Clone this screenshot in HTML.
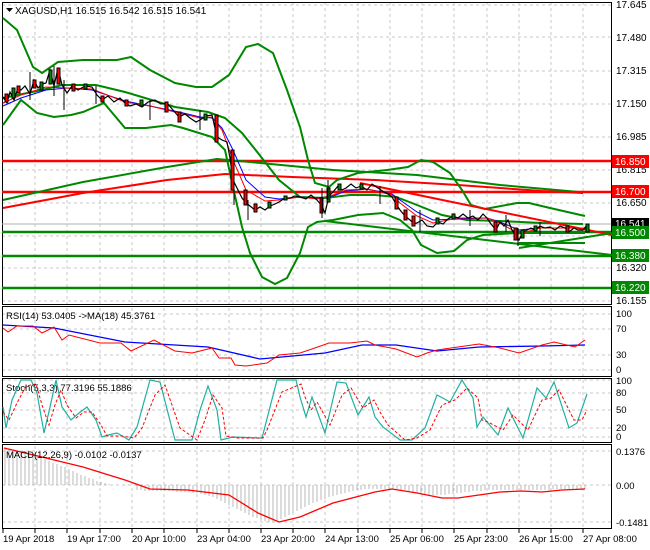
<!DOCTYPE html>
<html><head><meta charset="utf-8"><style>
html,body{margin:0;padding:0;background:#fff;}
svg{display:block;font-family:"Liberation Sans",sans-serif;}
</style></head><body>
<svg width="650" height="550" viewBox="0 0 650 550" xmlns="http://www.w3.org/2000/svg">
<rect width="650" height="550" fill="#fff"/>
<g stroke="#c8c8c8" stroke-dasharray="3,3" stroke-width="1">
<path d="M35 2V528M67 2V528M100 2V528M132 2V528M164 2V528M197 2V528M229 2V528M261 2V528M293 2V528M325 2V528M358 2V528M390 2V528M422 2V528M454 2V528M487 2V528M519 2V528M551 2V528M583 2V528"/>
<path d="M2 5H611M2 37H611M2 71H611M2 104H611M2 137H611M2 170H611M2 203H611M2 236H611M2 268H611M2 301H611"/>
<path d="M2 314H611M2 329H611M2 355H611M2 370H611M2 380H611M2 393H611M2 410H611M2 428H611M2 437H611M2 451H611M2 485H611M2 522H611"/>
</g>
<g fill="none" stroke="#000" stroke-width="1">
<rect x="2.5" y="2.5" width="609" height="302"/>
<rect x="2.5" y="306.5" width="609" height="70"/>
<rect x="2.5" y="378.5" width="609" height="64"/>
<rect x="2.5" y="444.5" width="609" height="84"/>
</g>
<line x1="2" y1="224" x2="611" y2="224" stroke="#b0b0b0"/>
<g stroke-width="2.5">
<line x1="2" y1="161" x2="611" y2="161" stroke="#f00"/>
<line x1="2" y1="192" x2="611" y2="192" stroke="#f00"/>
<line x1="2" y1="232" x2="611" y2="232" stroke="#080"/>
<line x1="2" y1="256" x2="611" y2="256" stroke="#080"/>
<line x1="2" y1="288" x2="611" y2="288" stroke="#080"/>
</g>
<polyline fill="none" stroke="#080" stroke-width="2" points="3,200 83,182 167,167 217,159 250,162 333,170 417,175 500,185 579,192"/>
<polyline fill="none" stroke="#f00" stroke-width="2" points="3,208 83,193 167,180 225,174 292,177 375,180 458,185 542,191 583,193"/>
<g fill="none" stroke="#080" stroke-width="2">
<polyline points="3,18 17,30 33,67 42,73 58,62 83,60 117,60 131,57 150,70 175,83 196,87 212,87 229,75 246,47 258,44 273,53 287,90 300,127 308,160 315,183 329,187 337,180 358,173 387,170 408,167 421,160 433,162 450,173 462,190 471,205 485,209 517,203 529,203 550,208 585,216"/>
<polyline points="3,125 21,100 37,113 54,117 71,115 83,112 104,103 125,128 146,128 171,125 183,128 212,137 225,150 233,187 242,227 250,253 262,277 275,284 287,278 300,253 308,227 317,222 333,220 358,215 383,213 400,220 412,230 421,245 437,253 454,251 467,240 483,235 517,233 542,233 585,233"/>
<polyline points="3,98 42,90 62,85 96,85 125,92 175,107 208,112 225,118 242,133 258,153 279,180 300,197 325,198 350,195 375,195 396,197 412,203 442,215 467,220 500,221 542,223 583,224"/>
</g>
<line x1="360" y1="183" x2="612" y2="235" stroke="#f00" stroke-width="2"/>
<line x1="325" y1="221" x2="612" y2="255" stroke="#080" stroke-width="2"/>
<line x1="519" y1="248" x2="612" y2="233" stroke="#080" stroke-width="2"/>
<line x1="519" y1="243" x2="585" y2="243" stroke="#080" stroke-width="2"/>
<polyline fill="none" stroke="#00f" stroke-width="1" points="3,106 21,98 46,90 67,88 92,90 125,101 150,106 179,112 200,117 212,118 222,128 233,150 246,180 265,197 279,199 300,197 317,198 333,196 346,191 367,189 392,194 400,200 417,212 433,220 458,219 487,218 500,222 519,230 540,228 567,228 587,228"/>
<polyline fill="none" stroke="#f00" stroke-width="1" points="3,103 21,95 46,87 67,88 92,89 125,102 150,106 179,113 200,118 212,117 222,130 233,160 246,190 265,201 279,200 300,197 317,199 333,195 346,190 367,189 392,195 400,203 417,216 433,223 458,218 487,218 500,223 519,234 540,228 567,228 587,228"/>
<polyline fill="none" stroke="#000" stroke-width="1.2" points="3,97 7,103 10,92 14,100 18,88 21,90 25,86 30,94 34,80 38,88 42,84 46,83 50,70 54,86 58,68 62,85 67,93 72,86 78,90 85,86 92,87 97,95 102,100 108,96 114,102 120,98 125,103 130,106 136,104 142,107 148,102 155,100 161,104 167,103 173,110 179,117 185,114 190,118 196,122 200,120 206,116 212,115 217,137 222,140 227,142 230,158 233,180 238,190 242,198 246,203 250,206 255,210 260,207 265,210 270,206 275,204 279,202 285,198 290,198 295,196 300,197 306,199 311,195 317,200 322,206 325,213 329,196 333,192 338,186 342,190 346,188 351,184 356,188 361,186 367,190 372,184 378,188 384,192 388,194 392,197 396,204 400,210 405,216 410,220 414,224 417,223 422,220 427,226 433,227 438,222 443,224 448,219 453,216 458,218 463,214 468,218 473,216 478,220 483,214 487,218 491,224 496,230 500,222 504,226 508,220 512,230 516,236 519,240 523,232 527,230 531,228 535,230 540,226 545,228 550,227 555,230 560,226 565,228 569,232 574,228 578,230 583,230 587,225"/>
<g stroke="#000" stroke-width="1" fill="#f00">
<rect x="5" y="94" width="3" height="8"/><rect x="17" y="86" width="3" height="7"/><rect x="33" y="80" width="3" height="8"/><rect x="57" y="68" width="3" height="16"/><rect x="72" y="84" width="3" height="7"/><rect x="101" y="96" width="3" height="6"/><rect x="125" y="100" width="3" height="6"/><rect x="165" y="102" width="3" height="10"/><rect x="178" y="112" width="3" height="10"/><rect x="215" y="115" width="3" height="27"/><rect x="231" y="150" width="3" height="40"/><rect x="244" y="190" width="3" height="15"/><rect x="254" y="204" width="3" height="8"/><rect x="320" y="198" width="3" height="15"/><rect x="395" y="197" width="3" height="12"/><rect x="404" y="210" width="3" height="10"/><rect x="412" y="216" width="3" height="10"/><rect x="494" y="222" width="3" height="10"/><rect x="514" y="228" width="3" height="12"/><rect x="566" y="226" width="3" height="6"/>
</g>
<g stroke="#000" stroke-width="1" fill="#080">
<rect x="12" y="88" width="3" height="10"/><rect x="40" y="82" width="3" height="8"/><rect x="49" y="70" width="3" height="14"/><rect x="84" y="84" width="3" height="5"/><rect x="140" y="100" width="3" height="6"/><rect x="204" y="114" width="3" height="6"/><rect x="268" y="202" width="3" height="6"/><rect x="284" y="196" width="3" height="4"/><rect x="327" y="188" width="3" height="14"/><rect x="338" y="184" width="3" height="6"/><rect x="360" y="184" width="3" height="5"/><rect x="436" y="218" width="3" height="6"/><rect x="452" y="214" width="3" height="5"/><rect x="521" y="230" width="3" height="8"/><rect x="534" y="226" width="3" height="5"/><rect x="586" y="224" width="3" height="8"/>
</g>
<g stroke="#000" stroke-width="1">
<path d="M30 72V100M54 66V96M64 80V110M96 86V104M150 100V120M200 110V130M234 170V205M248 200V220M322 188V218M328 180V200M380 186V204M420 210V232M470 210V226M506 215V232M518 228V246M540 222V236"/>
</g>
<g font-size="10" fill="#000">
<text x="616" y="8">17.645</text><text x="616" y="41">17.480</text><text x="616" y="74">17.315</text><text x="616" y="107">17.150</text><text x="616" y="140">16.985</text><text x="616" y="173">16.815</text><text x="616" y="206">16.650</text><text x="616" y="239">16.485</text><text x="616" y="271">16.320</text><text x="616" y="304">16.155</text>
</g>
<rect x="612" y="155" width="37" height="13" fill="#f00"/><text x="615" y="165" font-size="10" fill="#fff">16.850</text>
<rect x="612" y="185" width="37" height="13" fill="#f00"/><text x="615" y="195" font-size="10" fill="#fff">16.700</text>
<rect x="612" y="218" width="37" height="10" fill="#000"/><text x="615" y="227" font-size="10" fill="#fff">16.541</text>
<rect x="612" y="226" width="37" height="13" fill="#080"/><text x="615" y="236" font-size="10" fill="#fff">16.500</text>
<rect x="612" y="249" width="37" height="13" fill="#080"/><text x="615" y="259" font-size="10" fill="#fff">16.380</text>
<rect x="612" y="281" width="37" height="13" fill="#080"/><text x="615" y="291" font-size="10" fill="#fff">16.220</text>
<path d="M6 8h7l-3.5 4z" fill="#000"/>
<text x="15" y="14" font-size="10" fill="#000">XAGUSD,H1  16.515 16.542 16.515 16.541</text>
<!-- RSI -->
<text x="6" y="319" font-size="9.5" fill="#000">RSI(14) 53.0405  -&gt;MA(18) 45.3761</text>
<polyline fill="none" stroke="#00f" stroke-width="1.3" points="3,325 54,328 125,342 208,347 260,359 325,353 362,345 396,345 437,351 479,347 542,346 585,345"/>
<polyline fill="none" stroke="#f00" stroke-width="1" points="3,328 8,332 17,326 33,326 42,333 54,327 62,340 69,335 100,343 121,343 131,351 154,340 175,351 192,353 212,348 219,358 231,358 235,365 246,366 267,363 279,355 300,353 312,349 329,343 350,343 367,341 375,345 396,349 417,357 427,353 437,350 458,347 479,344 500,348 519,353 542,345 554,342 575,347 585,340"/>
<g font-size="9.5" fill="#000"><text x="616" y="317">100</text><text x="616" y="332">70</text><text x="616" y="358">30</text><text x="616" y="373">0</text></g>
<!-- Stoch -->
<text x="6" y="391" font-size="9.5" fill="#000">Stoch(5,3,3) 77.3196 55.1886</text>
<polyline fill="none" stroke="#20b0a0" stroke-width="1.2" points="3,407 6,428 12,400 21,380 31,380 37,393 44,433 50,407 56,380 62,407 71,420 79,413 87,407 96,420 102,437 108,435 117,433 129,440 137,427 150,380 160,382 175,440 192,440 200,410 208,386 217,410 221,440 233,437 258,438 262,438 277,380 296,380 300,397 306,417 312,397 325,433 337,382 346,383 358,415 369,397 375,417 383,427 400,440 412,440 425,428 437,395 450,402 462,380 473,398 477,427 483,417 498,435 508,408 523,438 537,388 546,398 554,382 569,428 577,423 587,394"/>
<polyline fill="none" stroke="#f00" stroke-width="1" stroke-dasharray="3,2" points="3,412 9,420 17,403 26,386 36,384 42,405 49,425 55,405 61,390 67,405 76,418 84,412 92,412 101,425 107,436 113,436 122,436 134,438 142,428 155,395 165,385 180,428 197,440 205,420 213,395 222,408 226,436 238,438 263,438 267,430 282,392 301,384 305,397 311,410 317,402 330,425 342,395 351,388 363,408 374,400 380,412 388,425 405,440 417,438 430,430 442,405 455,400 467,388 478,398 482,420 488,422 503,430 513,415 528,430 542,400 551,398 559,390 574,420 582,420 587,410"/>
<g font-size="9.5" fill="#000"><text x="616" y="384">100</text><text x="616" y="396">80</text><text x="616" y="413">50</text><text x="616" y="431">20</text><text x="616" y="440">0</text></g>
<!-- MACD -->
<g stroke="#b8b8b8" stroke-width="1">
<path d="M5 448V485M9 449V485M13 450V485M17 451V485M21 452V485M25 453V485M29 454V485M33 455V485M37 456V485M41 457V485M45 459V485M49 461V485M53 463V485M57 464V485M61 466V485M65 467V485M69 469V485M73 471V485M77 473V485M81 475V485M85 476V485M89 478V485M93 479V485M97 481V485M101 482V485M105 483V485M109 484V485"/>
<path d="M137 485V490M141 485V490M145 485V491M149 485V491M153 485V491M157 485V491M161 485V491M165 485V491M169 485V491M173 485V491M177 485V492M181 485V492M185 485V492M189 485V492M193 485V493M197 485V493M201 485V494M205 485V495M209 485V496M213 485V497M217 485V499M221 485V501M225 485V503M229 485V505M233 485V507M237 485V509M241 485V511M245 485V513M249 485V515M253 485V517M257 485V518M261 485V520M265 485V521M269 485V522M273 485V522M277 485V521M281 485V519M285 485V517M289 485V515M293 485V513M297 485V511M301 485V509M305 485V507M309 485V505M313 485V503M317 485V502M321 485V500M325 485V499M329 485V497M333 485V496M337 485V495M341 485V494M345 485V493M349 485V492M353 485V491M357 485V490M361 485V490M365 485V489M369 485V489M373 485V489M377 485V489M381 485V489M385 485V489M389 485V489M393 485V489M397 485V489M401 485V490M405 485V490M409 485V491M413 485V492M417 485V493M421 485V494M425 485V494M429 485V495M433 485V495M437 485V495M441 485V495M445 485V495M449 485V494M453 485V494M457 485V493M461 485V493M465 485V492M469 485V492M473 485V491M477 485V491M481 485V491M485 485V490M489 485V490M493 485V490M497 485V490M501 485V490M505 485V490M509 485V490M513 485V490M517 485V490M521 485V490M525 485V490M529 485V490M533 485V490M537 485V490M541 485V490M545 485V490M549 485V490M553 485V489M557 485V489M561 485V489M565 485V489M569 485V489M573 485V489M577 485V489M581 485V489M585 485V489"/>
</g>
<polyline fill="none" stroke="#f00" stroke-width="1.3" points="4,448 42,457 83,467 125,480 150,489 188,490 229,495 258,513 279,522 300,517 333,503 375,492 392,489 417,493 442,498 458,498 500,492 521,491 542,492 562,490 585,489"/>
<text x="6" y="458" font-size="9.5" fill="#000">MACD(12,26,9) -0.0102 -0.0137</text>
<g font-size="9.5" fill="#000"><text x="616" y="455">0.1376</text><text x="616" y="489">0.00</text><text x="616" y="526">-0.1481</text></g>
<g stroke="#000"><path d="M3 528V533M35 528V533M67 528V533M100 528V533M132 528V533M164 528V533M197 528V533M229 528V533M261 528V533M293 528V533M325 528V533M358 528V533M390 528V533M422 528V533M454 528V533M487 528V533M519 528V533M551 528V533M583 528V533"/></g>
<g font-size="9.5" fill="#000">
<text x="3" y="542">19 Apr 2018</text><text x="67" y="542">19 Apr 17:00</text><text x="132" y="542">20 Apr 10:00</text><text x="197" y="542">23 Apr 04:00</text><text x="261" y="542">23 Apr 20:00</text><text x="325" y="542">24 Apr 13:00</text><text x="390" y="542">25 Apr 06:00</text><text x="454" y="542">25 Apr 23:00</text><text x="519" y="542">26 Apr 15:00</text><text x="583" y="542">27 Apr 08:00</text>
</g>
</svg>
</body></html>
